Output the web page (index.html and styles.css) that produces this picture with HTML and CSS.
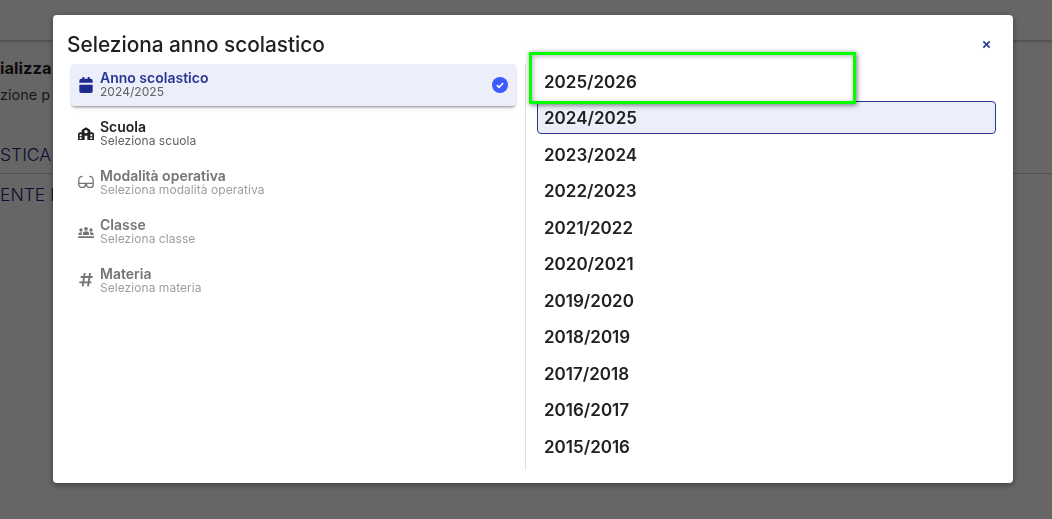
FILE: index.html
```html
<!DOCTYPE html>
<html lang="it">
<head>
  <meta charset="UTF-8">
  <title>Seleziona anno scolastico</title>
  <link rel="stylesheet" href="styles.css">
</head>
<body>
  <div class="page">
    <header class="topbar"></header>
    <main class="content">
      <h2 class="content-title">ializza</h2>
      <p class="content-sub">zione p</p>
      <div class="tab-row tab-line">STICA</div>
      <div class="tab-row">ENTE E</div>
    </main>
  </div>

  <div class="backdrop">
    <div class="dialog">
      <div class="dialog-head">
        <h1 class="dialog-title">Seleziona anno scolastico</h1>
        <svg class="close" viewBox="0 0 10 10"><path d="M1.5 1.5l7 7M8.5 1.5l-7 7"/></svg>
      </div>
      <div class="dialog-body">
        <div class="steps">
          <div class="step step-active">
            <svg class="step-icon" viewBox="0 0 24 24"><path d="M6.500 0h3v2.500h5V0h3v2.500H19A3 3 0 0 1 22 5.500v16a2.500 2.500 0 0 1-2.500 2.500h-15A2.500 2.500 0 0 1 2 21.500v-16a3 3 0 0 1 3-3h1.500zM2 8.500v3h20v-3z" fill-rule="evenodd"/></svg>
            <div class="step-text">
              <div class="step-name">Anno scolastico</div>
              <div class="step-value">2024/2025</div>
            </div>
            <svg class="step-check" viewBox="0 0 16 16"><circle cx="8" cy="8" r="8"/><path d="M4.800 8.200l2.200 2.100 4.200-4.300"/></svg>
          </div>
          <div class="step">
            <svg class="step-icon" viewBox="0 0 24 24"><path d="M12 2l6.500 4v3.500H21a3 3 0 0 1 3 3V21H0v-8.500a3 3 0 0 1 3-3h2.500V6zM12 6a2.500 2.500 0 1 0 0 5 2.500 2.500 0 0 0 0-5zM2.500 12.500v3h3v-3zM18.500 12.500v3h3v-3zM10 14.500v6.500h4v-6.500zM2.500 17v2.500h3V17zM18.500 17v2.500h3V17z" fill-rule="evenodd"/></svg>
            <div class="step-text">
              <div class="step-name">Scuola</div>
              <div class="step-value">Seleziona scuola</div>
            </div>
          </div>
          <div class="step step-off">
            <svg class="step-icon" viewBox="0 0 24 24"><path class="line-icon glasses" d="M1.200 12.500v2a4 4 0 0 0 4 4h2a4 4 0 0 0 4-4v-2zM12.800 12.500v2a4 4 0 0 0 4 4h2a4 4 0 0 0 4-4v-2zM11.200 12.500h1.600M1.200 12.500V8q0-6 5.800-6M22.800 12.500V8q0-6-5.800-6"/></svg>
            <div class="step-text">
              <div class="step-name">Modalità operativa</div>
              <div class="step-value">Seleziona modalità operativa</div>
            </div>
          </div>
          <div class="step step-off">
            <svg class="step-icon" viewBox="0 0 24 24"><path d="M0 18.500h24V21H0zM12 4.500a2.800 2.800 0 1 1 0 5.600 2.800 2.800 0 0 1 0-5.600zM4.500 6.500a2.500 2.500 0 1 1 0 5 2.500 2.500 0 0 1 0-5zM19.500 6.500a2.500 2.500 0 1 1 0 5 2.500 2.500 0 0 1 0-5zM7.500 16.500v-2.500q0-3 4.500-3t4.500 3v2.500zM.5 16.500v-1.500q0-2.500 4-2.500 1 0 1.800.3-.8.800-.8 2.200v1.500zM23.500 16.500v-1.500q0-2.500-4-2.500-1 0-1.800.3.800.8.800 2.200v1.500z"/></svg>
            <div class="step-text">
              <div class="step-name">Classe</div>
              <div class="step-value">Seleziona classe</div>
            </div>
          </div>
          <div class="step step-off">
            <svg class="step-icon" viewBox="0 0 24 24"><path class="line-icon hash" d="M10 0L7 20M18 0l-3 20M4 6h18M2 14h18"/></svg>
            <div class="step-text">
              <div class="step-name">Materia</div>
              <div class="step-value">Seleziona materia</div>
            </div>
          </div>
        </div>
        <div class="years">
          <div class="year">2025/2026</div>
          <div class="year year-current">2024/2025</div>
          <div class="year">2023/2024</div>
          <div class="year">2022/2023</div>
          <div class="year">2021/2022</div>
          <div class="year">2020/2021</div>
          <div class="year">2019/2020</div>
          <div class="year">2018/2019</div>
          <div class="year">2017/2018</div>
          <div class="year">2016/2017</div>
          <div class="year">2015/2016</div>
        </div>
      </div>
    </div>
  </div>

  <div class="highlight"></div>
</body>
</html>
```

FILE: styles.css
```css
html, body {
  margin: 0;
  height: 100%;
  overflow: hidden;
}

body {
  font-family: Inter, "Liberation Sans", sans-serif;
  background: #fff;
  color: #212121;
}

.topbar {
  height: 40px;
  background: #fff;
  box-shadow: 0 1px 3px rgba(0, 0, 0, 0.35);
}

.content {
  white-space: nowrap;
}

.content-title {
  margin: 18px 0 0;
  font-size: 16.5px;
  line-height: 20px;
  font-weight: 700;
}

.content-sub {
  margin: 8px 0 0;
  font-size: 14.5px;
  line-height: 18px;
  color: #444;
}

.tab-row {
  height: 42px;
  box-sizing: border-box;
  font-size: 17.5px;
  line-height: 42px;
  font-weight: 300;
  color: #1a237e;
}

.tab-line {
  margin-top: 27px;
  height: 43px;
  padding-top: 2px;
  line-height: 43px;
  border-bottom: 1px solid #ccc;
}

.backdrop {
  position: fixed;
  inset: 0;
  background: rgba(0, 0, 0, 0.6);
}

.dialog {
  width: 960px;
  height: 468px;
  margin: 15px 0 0 53px;
  box-sizing: border-box;
  background: #fff;
  border-radius: 4px;
  box-shadow: 0 2px 6px rgba(0, 0, 0, 0.4);
}

.dialog-head {
  display: flex;
  align-items: center;
  justify-content: space-between;
  padding: 15px 22px 0 14px;
}

.dialog-title {
  margin: 0;
  font-size: 20.8px;
  line-height: 29px;
  font-weight: 500;
  color: #212121;
}

.close {
  width: 9px;
  height: 9px;
}

.close path {
  fill: none;
  stroke: #303f9f;
  stroke-width: 2;
}

.dialog-body {
  display: flex;
  margin-top: 5px;
}

.steps {
  width: 445px;
  margin: 0 9px 0 18px;
}

.step {
  display: flex;
  align-items: center;
  height: 42px;
  margin-bottom: 7px;
  padding: 0 8px 0 7px;
  border-radius: 4px;
}

.step-active {
  background: #eceefa;
  box-shadow: 0 2px 3px -1px rgba(0, 0, 0, 0.45), 0 6px 6px -2px rgba(0, 0, 0, 0.04);
}

.step-icon {
  flex: none;
  width: 16px;
  height: 16px;
  margin-right: 6px;
  fill: #212121;
}

.step-active .step-icon {
  fill: #1f2b8f;
}

.step-off .step-icon {
  fill: #757575;
}

.line-icon {
  fill: none;
  stroke: #757575;
}

.step-off .glasses {
  fill: none;
  stroke-width: 2;
}

.step-off .hash {
  fill: none;
  stroke-width: 2.800;
}

.step-text {
  flex: 1;
  padding-bottom: 2px;
}

.step-name {
  font-size: 14px;
  line-height: 14px;
  font-weight: 600;
}

.step-value {
  font-size: 12px;
  line-height: 13px;
  letter-spacing: 0.05px;
  color: #616161;
}

.step-active .step-name {
  color: #283593;
}

.step-off .step-name {
  color: #757575;
}

.step-off .step-value {
  color: #9e9e9e;
}

.step-check {
  width: 16px;
  height: 16px;
}

.step-check circle {
  fill: #3d5afe;
}

.step-check path {
  fill: none;
  stroke: #fff;
  stroke-width: 1.6;
}

.years {
  flex: 1;
  height: 405px;
  margin-right: 17px;
  padding-top: 0.5px;
  padding-left: 11px;
  border-left: 1px solid #ddd;
  display: flex;
  flex-direction: column;
  gap: 3.5px;
}

.year {
  box-sizing: border-box;
  height: 33px;
  padding-left: 6px;
  font-size: 17px;
  line-height: 33px;
  font-weight: 600;
  color: #212121;
  border: 1px solid transparent;
  border-radius: 4px;
}

.year-current {
  background: #eceefa;
  border-color: #283593;
}

.highlight {
  position: fixed;
  left: 529px;
  top: 52px;
  width: 327px;
  height: 52px;
  box-sizing: border-box;
  border: 3px solid #00ff00;
  box-shadow: 1px 1px 5px rgba(0, 0, 0, 0.55), inset 1px 1px 5px rgba(0, 0, 0, 0.3);
}
```
